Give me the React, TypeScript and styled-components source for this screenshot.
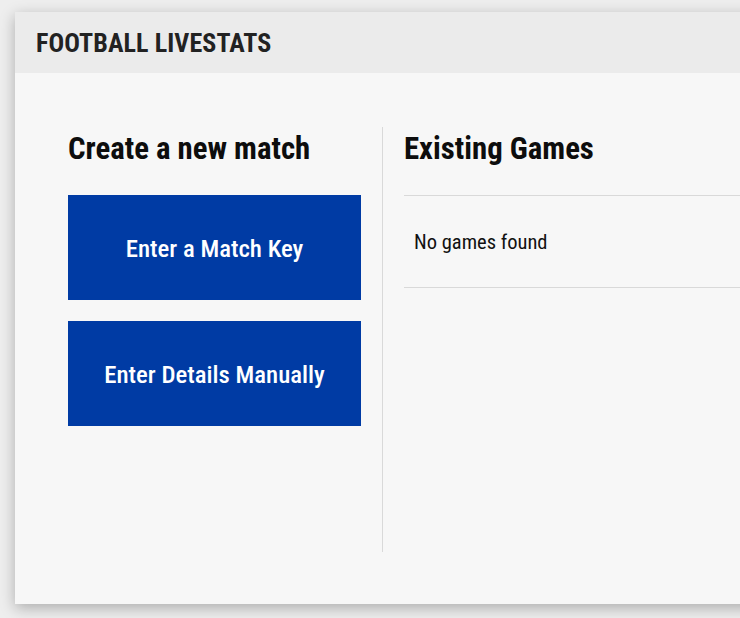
import React from "react";
import styled, { createGlobalStyle } from "styled-components";

const GlobalStyle = createGlobalStyle`
  html, body {
    margin: 0;
    padding: 0;
    background: #eeeeee;
    overflow: hidden;
  }
  body {
    font-family: "Roboto Condensed", Roboto, "Liberation Sans", sans-serif;
  }
`;

const Page = styled.div`
  width: 740px;
  height: 618px;
  padding: 12px 0 0 15px;
  box-sizing: border-box;
  overflow: hidden;
`;

const Card = styled.section`
  width: 760px;
  height: 592px;
  background: #f7f7f7;
  box-shadow: 0 4px 14px rgba(0, 0, 0, 0.28);
  display: flex;
  flex-direction: column;
`;

const TitleBar = styled.header`
  height: 61px;
  flex: none;
  background: #ebebeb;
  display: flex;
  align-items: center;
  padding-left: 21px;
`;

const Title = styled.h1`
  margin: 0;
  font-size: 26px;
  font-weight: 700;
  color: #222;
  text-transform: uppercase;
  letter-spacing: 0.1px;
`;

const Body = styled.main`
  display: flex;
  padding: 54px 0 0 53px;
`;

const LeftColumn = styled.div`
  width: 293px;
  height: 425px;
  padding-right: 21px;
  border-right: 1px solid #d9d9d9;
  display: flex;
  flex-direction: column;
`;

const RightColumn = styled.div`
  flex: 1;
  padding-left: 21px;
  display: flex;
  flex-direction: column;
`;

const Heading = styled.h2`
  margin: 0;
  height: 68px;
  box-sizing: border-box;
  padding-top: 4px;
  font-size: 30.8px;
  line-height: 36px;
  font-weight: 700;
  color: #0d0d0d;
  white-space: nowrap;
`;

const ButtonStack = styled.div`
  display: flex;
  flex-direction: column;
  gap: 21px;
`;

const ActionButton = styled.button`
  width: 293px;
  height: 105px;
  border: none;
  background: #003ba4;
  color: #fff;
  font-family: inherit;
  font-size: 24.8px;
  font-weight: 500;
  cursor: pointer;
  padding: 2px 0 0;
`;

const GameList = styled.div`
  border-top: 1px solid #d9d9d9;
  border-bottom: 1px solid #d9d9d9;
`;

const EmptyRow = styled.div`
  height: 91px;
  display: flex;
  align-items: center;
  padding-left: 10px;
  font-size: 20.5px;
  color: #111;
`;

export default function App() {
  return (
    <>
      <GlobalStyle />
      <Page>
        <Card>
          <TitleBar>
            <Title>Football Livestats</Title>
          </TitleBar>
          <Body>
            <LeftColumn>
              <Heading>Create a new match</Heading>
              <ButtonStack>
                <ActionButton>Enter a Match Key</ActionButton>
                <ActionButton>Enter Details Manually</ActionButton>
              </ButtonStack>
            </LeftColumn>
            <RightColumn>
              <Heading>Existing Games</Heading>
              <GameList>
                <EmptyRow>No games found</EmptyRow>
              </GameList>
            </RightColumn>
          </Body>
        </Card>
      </Page>
    </>
  );
}
